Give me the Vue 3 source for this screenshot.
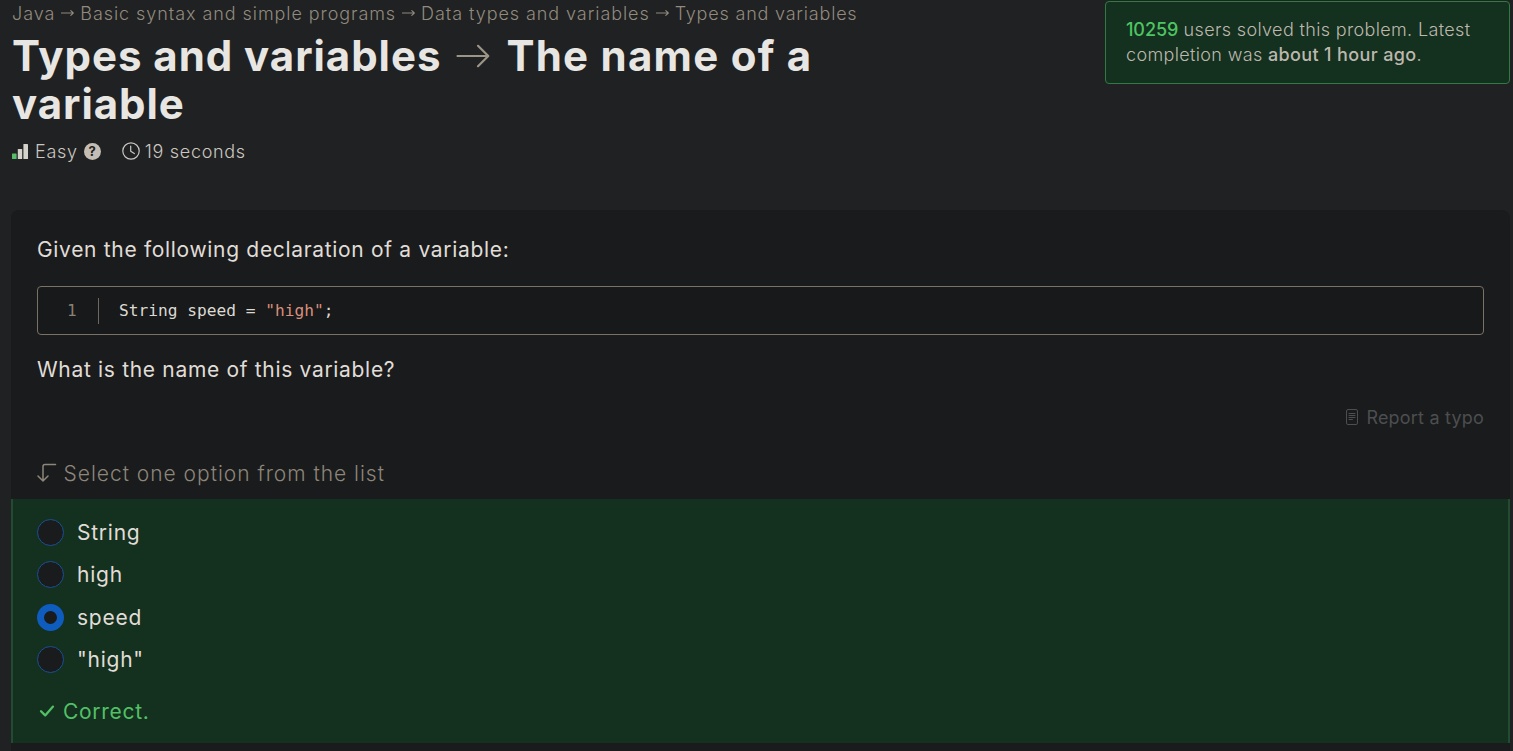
<script setup>
import { ref } from 'vue'

const crumbs = ['Java', 'Basic syntax and simple programs', 'Data types and variables', 'Types and variables']
const options = ['String', 'high', 'speed', '"high"']
const selected = ref('speed')
</script>

<template>
  <main class="page">
    <header class="top">
      <div class="intro">
        <nav class="crumbs">
          <template v-for="(crumb, i) in crumbs" :key="crumb">
            <svg v-if="i" class="crumb-arrow" viewBox="0 0 13 8"><path d="M0 4H12.3M9.8 1.7L12.3 4L9.8 6.3" /></svg>
            <a :class="'crumb-' + i">{{ crumb }}</a>
          </template>
        </nav>
        <h1 class="title">
          <span>Types and variables</span>
          <svg class="title-arrow" viewBox="0 0 34 24"><path d="M1.5 12H32M22 1.8L32.3 12L22 22.2" /></svg>
          <span class="second">The name of a</span><br />variable
        </h1>
        <div class="meta">
          <svg class="bars" viewBox="0 0 16 15">
            <rect class="bar-on" x="0" y="9.5" width="4.6" height="5.5" rx=".6" />
            <rect x="5.8" y="5" width="4.4" height="10" rx=".6" />
            <rect x="11.4" y="0" width="4.6" height="15" rx=".6" />
          </svg>
          <span class="level">Easy</span>
          <span class="help">?</span>
          <svg class="clock" viewBox="0 0 18 18"><circle cx="9" cy="9" r="8.2" /><path d="M8.7 4V9.3L12.3 11.6" /></svg>
          <span class="time">19 seconds</span>
        </div>
      </div>
      <aside class="solved">
        <b class="count">10259</b> users solved this problem. Latest<br />completion was <b>about 1 hour ago</b>.
      </aside>
    </header>

    <section class="card">
      <div class="body">
        <p>Given the following declaration of a variable:</p>
        <div class="code">
          <span class="line-no">1</span>
          <code>String speed = <span class="str">"high"</span>;</code>
        </div>
        <p>What is the name of this variable?</p>
        <div class="report">
          <svg viewBox="0 0 12 16"><rect x=".5" y=".5" width="11" height="15" rx="1.5" /><path d="M3 4.5H9M3 6.5H9M3 8.5H9M3 10.5H6.5" /></svg>
          <span>Report a typo</span>
        </div>
        <div class="hint">
          <svg viewBox="0 0 20 20"><path d="M18.5 1.5H8Q6 1.5 6 3.5V18M1 13L6 18L11 13" /></svg>
          <span>Select one option from the list</span>
        </div>
      </div>
      <div class="answers">
        <label v-for="option in options" :key="option" class="option">
          <span class="radio" :class="{ on: option === selected }"></span>
          <span>{{ option }}</span>
        </label>
        <div class="verdict">
          <svg viewBox="0 0 16 14"><path d="M2 7.2L6.2 11.4L14 2.6" /></svg>
          <span>Correct.</span>
        </div>
      </div>
    </section>
  </main>
</template>

<style>
body { background: #1f2122; overflow: hidden; }
</style>

<style scoped>
.page {
  box-sizing: border-box;
  height: 751px;
  overflow: hidden;
  padding: 1px 3px 0 11px;
  background: #1f2122;
  color: #e0ddd8;
  font-family: Inter, "Liberation Sans", sans-serif;
}
svg { flex: none; fill: none; stroke: currentColor; stroke-linecap: round; stroke-linejoin: round; }

.top { display: flex; justify-content: space-between; align-items: flex-start; height: 209px; }
.crumbs {
  display: flex;
  align-items: center;
  gap: 6px;
  height: 24px;
  padding-left: 1px;
  color: #928a7e;
  font-size: 18px;
  font-weight: 300;
  letter-spacing: .93px;
  white-space: nowrap;
}
.crumb-3 { letter-spacing: .8px; }
.crumb-arrow { width: 13px; height: 8px; stroke-width: 1.1; }
.title {
  margin: 7px 0 0 1px;
  color: #e8e6e3;
  font-size: 42px;
  line-height: 48px;
  font-weight: 700;
  letter-spacing: .95px;
  white-space: nowrap;
}
.second { letter-spacing: 1.25px; }
.title-arrow { width: 34px; height: 24px; margin: 0 16px 0 15px; color: #9c9487; stroke-width: 2.2; vertical-align: 3px; }
.meta {
  display: flex;
  align-items: center;
  height: 24px;
  margin: 11px 0 0 1px;
  color: #cbc7c0;
  font-size: 18px;
  font-weight: 300;
  letter-spacing: .7px;
}
.bars { width: 16px; height: 15px; margin-right: 7px; fill: #d5d1cb; stroke: none; }
.bar-on { fill: #55bd68; }
.help {
  width: 17px;
  height: 17px;
  margin: 0 21px 0 6px;
  border-radius: 50%;
  background: #c4beb5;
  color: #1f2122;
  font-size: 13px;
  font-weight: 700;
  line-height: 17px;
  letter-spacing: 0;
  text-align: center;
}
.clock { width: 18px; height: 18px; margin-right: 5px; stroke-width: 1.2; }

.solved {
  box-sizing: border-box;
  width: 405px;
  height: 83px;
  padding: 15px 0 0 20px;
  border: 1px solid #317a43;
  border-radius: 4px;
  background: #14301e;
  color: #bdb7ae;
  font-size: 18px;
  font-weight: 300;
  line-height: 25px;
  letter-spacing: .35px;
  white-space: nowrap;
}
.solved b { font-weight: 500; letter-spacing: .36px; }
.solved .count { color: #4fc463; letter-spacing: -.1px; }

.card { width: 1499px; height: 560px; border-radius: 8px 8px 0 0; background: #1a1b1c; }
.body { height: 265px; padding: 24px 26px 0; }
p { margin: 0; font-size: 21px; line-height: 32px; letter-spacing: .68px; }
.code {
  display: flex;
  align-items: center;
  box-sizing: border-box;
  height: 49px;
  margin: 20px 0 19px;
  border: 1px solid #7a7266;
  border-radius: 4px;
  background: #18191a;
  font-family: "DejaVu Sans Mono", monospace;
  font-size: 16.2px;
}
.line-no { width: 31px; padding-left: 29px; border-right: 1px solid #6d675e; color: #8a8276; line-height: 26px; font-size: 16px; }
code { margin-left: 20px; color: #dcd9d3; font: inherit; white-space: pre; }
.str { color: #da907b; }
.report {
  display: flex;
  justify-content: flex-end;
  align-items: center;
  gap: 8px;
  height: 24px;
  margin-top: 19px;
  color: #4c4e50;
  font-size: 18px;
  letter-spacing: .2px;
}
.report svg { width: 12px; height: 16px; }
.hint {
  display: flex;
  align-items: center;
  gap: 6.5px;
  height: 32px;
  margin-top: 28px;
  color: #8d867a;
  font-size: 21px;
  font-weight: 300;
  letter-spacing: .98px;
}
.hint svg { width: 20px; height: 20px; stroke-width: 1.5; }

.answers {
  box-sizing: border-box;
  height: 244px;
  padding: 12px 24px 0;
  border: solid #234b31;
  border-width: 0 2px;
  background: #14301e;
  font-size: 21px;
}
.option { display: flex; align-items: center; gap: 13px; height: 42.5px; letter-spacing: .75px; }
.radio { box-sizing: border-box; width: 27px; height: 27px; border: 1px solid #1a5096; border-radius: 50%; background: #191b1d; }
.radio.on { border: 7px solid #0f5cbf; }
.verdict { display: flex; align-items: center; gap: 8px; height: 32px; margin-top: 14px; padding-left: 2px; color: #52c066; letter-spacing: .7px; }
.verdict svg { width: 16px; height: 14px; stroke-width: 2.3; }
</style>
